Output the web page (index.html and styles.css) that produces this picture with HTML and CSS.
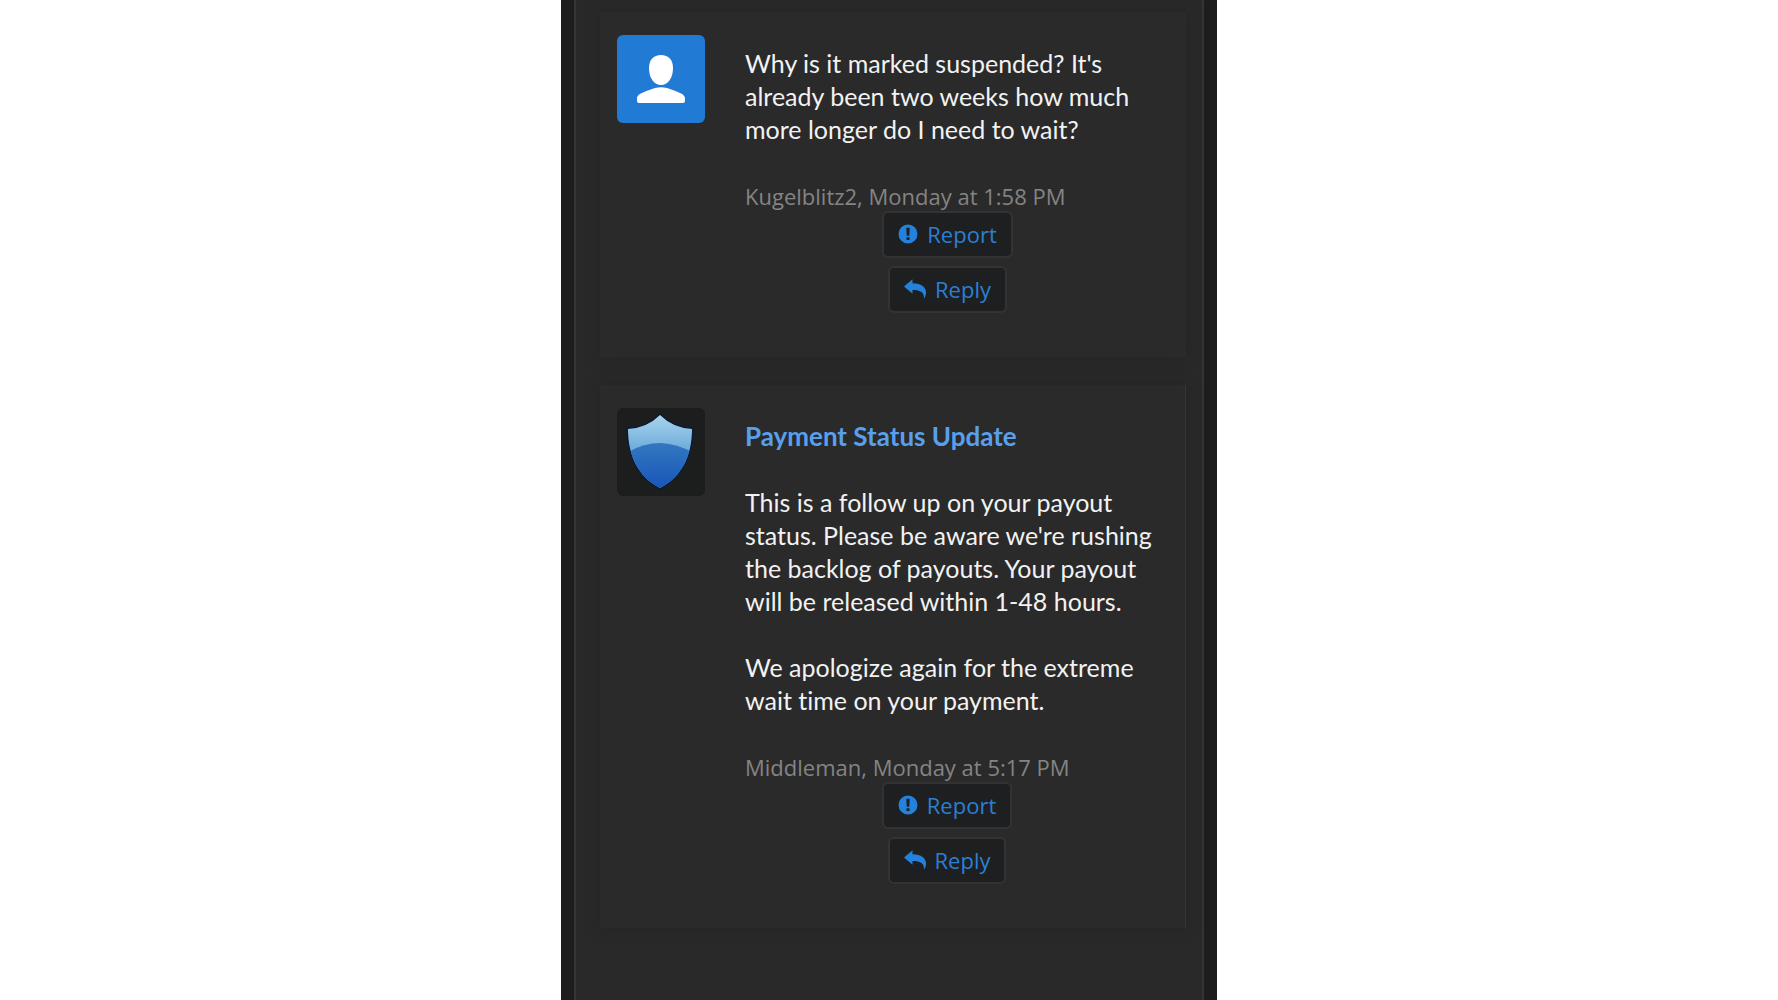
FILE: index.html
```
<!DOCTYPE html>
<html lang="en">
  <head>
    <meta charset="utf-8">
    <meta name="viewport" content="width=device-width, initial-scale=1">
    <title>Conversation</title>
    <link rel="stylesheet" href="styles.css">
  </head>
  <body>
    <svg class="sprite" aria-hidden="true">
      <symbol id="icon-report" viewBox="0 0 20 20">
        <path fill-rule="evenodd" d="M10 0.500A9.500 9.500 0 1 1 10 19.500A9.500 9.500 0 1 1 10 0.500ZM8.300 3.700L8.700 11.700H11.300L11.700 3.700ZM8.500 13.200V16.100H11.500V13.200Z"/>
      </symbol>
      <symbol id="icon-reply" viewBox="0 0 22 20">
        <path d="M0 7.500L8.500 0.300V4.300C17.500 4.300 22 8.500 22 13.500C22 16 21.300 18 20 19.700C20.300 13.500 17 10.900 8.500 10.900V14.700Z"/>
      </symbol>
    </svg>

    <main class="page">
      <div class="thread">
        <article class="message">
          <svg class="avatar avatar-user" viewBox="0 0 88 88" role="img" aria-label="Kugelblitz2">
            <path d="M44 20C51.500 20 56 25 56 33C56 43 51 50 44 50C37 50 32 43 32 33C32 25 36.500 20 44 20Z"/>
            <path d="M20 66V63C20 58 33 55 38 53Q44 51.500 50 53C55 55 68 58 68 63V66Q68 68 66 68H22Q20 68 20 66Z"/>
          </svg>
          <div class="message-body">
            <p class="text">Why is it marked suspended? It's already been two weeks how much more longer do I need to wait?</p>
            <p class="meta">Kugelblitz2, Monday at 1:58 PM</p>
            <div class="actions">
              <button type="button"><svg class="icon"><use href="#icon-report"/></svg>Report</button>
              <button type="button"><svg class="icon icon-reply"><use href="#icon-reply"/></svg>Reply</button>
            </div>
          </div>
        </article>

        <article class="message message-new">
          <svg class="avatar avatar-staff" viewBox="0 0 88 88" role="img" aria-label="Middleman">
            <defs>
              <linearGradient id="shield-top" x1="0" y1="0" x2="0" y2="1">
                <stop offset="0" stop-color="#b5dcec"/>
                <stop offset="0.500" stop-color="#6aa9dc"/>
              </linearGradient>
              <linearGradient id="shield-bottom" x1="0" y1="0" x2="0" y2="1">
                <stop offset="0" stop-color="#3278bf"/>
                <stop offset="1" stop-color="#1450b8"/>
              </linearGradient>
              <clipPath id="shield-clip">
                <path d="M43 7Q56 20 75 21C75 47 65 69 43 80C21 69 11 47 11 21Q30 20 43 7Z"/>
              </clipPath>
            </defs>
            <path class="shield-edge" d="M43 7Q56 20 75 21C75 47 65 69 43 80C21 69 11 47 11 21Q30 20 43 7Z"/>
            <g clip-path="url(#shield-clip)">
              <rect fill="url(#shield-top)" width="88" height="88"/>
              <path fill="url(#shield-bottom)" d="M8 46Q25 35 44 35Q62 36 78 46V88H8Z"/>
            </g>
          </svg>
          <div class="message-body">
            <h2 class="title">Payment Status Update</h2>
            <p class="text">This is a follow up on your payout status. Please be aware we're rushing the backlog of payouts. Your payout will be released within 1-48 hours.</p>
            <p class="text">We apologize again for the extreme wait time on your payment.</p>
            <p class="meta">Middleman, Monday at 5:17 PM</p>
            <div class="actions">
              <button type="button"><svg class="icon"><use href="#icon-report"/></svg>Report</button>
              <button type="button"><svg class="icon icon-reply"><use href="#icon-reply"/></svg>Reply</button>
            </div>
          </div>
        </article>
      </div>
    </main>
  </body>
</html>
```
FILE: styles.css
```
* {
  box-sizing: border-box;
}
body {
  margin: 0;
  background-color: #fff;
  font-family: "Open Sans", sans-serif;
}
.sprite {
  display: none;
}
.page {
  display: flex;
  max-width: 656px;
  min-height: 100vh;
  margin: 0 auto;
  padding: 0 13px;
  background-color: #1d1d1d;
}
.thread {
  flex: 1;
  display: flex;
  flex-direction: column;
  gap: 28px;
  padding: 12px 16px 12px 24px;
  background-color: #292929;
  border-left: 2px solid #343434;
  border-right: 2px solid #343434;
}
.message {
  display: flex;
  align-items: flex-start;
  gap: 40px;
  padding: 23px 28px 44px 17px;
  background-color: #2a2a2a;
  box-shadow: 0 0 12px #242424;
}
.message-new {
  border-right: 1px solid #343434;
}
.avatar {
  flex: none;
  width: 88px;
  height: 88px;
  border-radius: 6px;
}
.avatar-user {
  background-color: #217ad4;
  fill: #fff;
}
.avatar-staff {
  background-color: #1b1e1d;
}
.shield-edge {
  stroke: #0a1a38;
  stroke-width: 3;
}
.message-body {
  flex: 1;
  padding-top: 12px;
}
.title,
.text {
  margin: 0 0 33px;
  font-family: Lato, sans-serif;
  font-size: 25px;
  font-variant-ligatures: none;
  line-height: 33px;
}
.title {
  color: #58a0ed;
  font-size: 26px;
  font-weight: bold;
}
.text {
  color: #f2f2f2;
}
.meta {
  margin: 0 0 -3px;
  color: #848484;
  font-size: 22px;
  line-height: 35px;
}
.actions {
  display: flex;
  flex-direction: column;
  align-items: center;
  gap: 8px;
  padding-right: 8px;
}
.actions button {
  display: flex;
  align-items: center;
  gap: 9px;
  height: 47px;
  padding: 0 14px 2px;
  background-color: #1e1f20;
  border: 2px solid #333;
  border-radius: 6px;
  color: #2b7fd3;
  font-family: inherit;
  font-size: 22px;
}
.icon {
  width: 20px;
  height: 20px;
  fill: #2481dc;
}
.icon-reply {
  width: 22px;
}
```
